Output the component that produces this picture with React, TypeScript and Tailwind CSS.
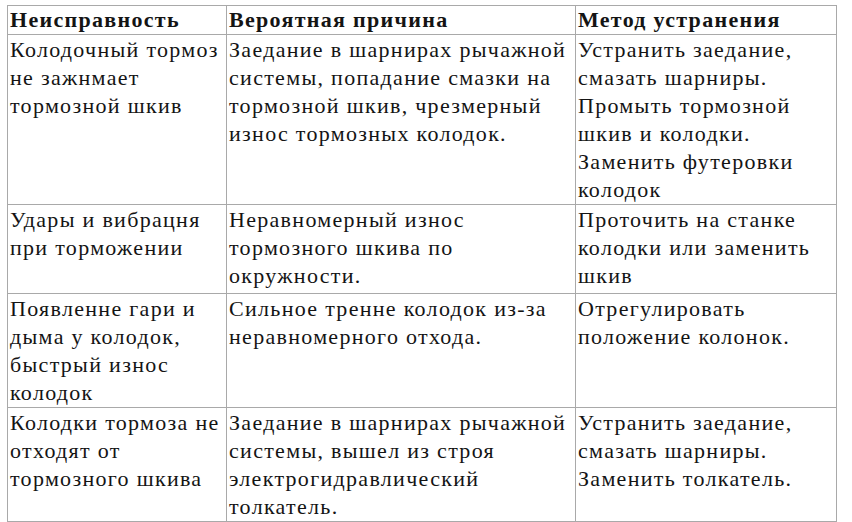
type Row = {
  fault: string[];
  cause: string[];
  fix: string[];
  h: string;
};

const rows: Row[] = [
  {
    fault: ["Колодочный тормоз", "не зажнмает", "тормозной шкив"],
    cause: [
      "Заедание в шарнирах рычажной",
      "системы, попадание смазки на",
      "тормозной шкив, чрезмерный",
      "износ тормозных колодок.",
    ],
    fix: [
      "Устранить заедание,",
      "смазать шарниры.",
      "Промыть тормозной",
      "шкив и колодки.",
      "Заменить футеровки",
      "колодок",
    ],
    h: "h-[169px]",
  },
  {
    fault: ["Удары и вибрацня", "при торможении"],
    cause: ["Неравномерный износ", "тормозного шкива по", "окружности."],
    fix: ["Проточить на станке", "колодки или заменить", "шкив"],
    h: "h-[89px]",
  },
  {
    fault: ["Появленне гари и", "дыма у колодок,", "быстрый износ", "колодок"],
    cause: ["Сильное тренне колодок из-за", "неравномерного отхода."],
    fix: ["Отрегулировать", "положение колонок."],
    h: "h-[114px]",
  },
  {
    fault: ["Колодки тормоза не", "отходят от", "тормозного шкива"],
    cause: [
      "Заедание в шарнирах рычажной",
      "системы, вышел из строя",
      "электрогидравлический",
      "толкатель.",
    ],
    fix: ["Устранить заедание,", "смазать шарниры.", "Заменить толкатель."],
    h: "h-[114px]",
  },
];

function Lines({ items }: { items: string[] }) {
  return (
    <>
      {items.map((t) => (
        <div key={t} className="whitespace-nowrap">
          {t}
        </div>
      ))}
    </>
  );
}

const cell = "border border-[#a9a9a9] align-top pl-[2px] pt-[1px] overflow-hidden";
const head = "border border-[#a9a9a9] text-left font-bold pl-[2px] align-middle tracking-[1.3px]";

export default function App() {
  return (
    <div className="w-[852px] h-[522px] bg-white overflow-hidden pt-[5px] pl-[7px]">
      <table className="border-collapse table-fixed w-[829px] text-[#141414] text-[22px] leading-[28px] tracking-[1.3px] font-['Liberation_Serif','Times_New_Roman',serif]">
        <colgroup>
          <col className="w-[219px]" />
          <col className="w-[349px]" />
          <col className="w-[261px]" />
        </colgroup>
        <thead>
          <tr className="h-[29px]">
            <th className={head}>Неисправность</th>
            <th className={head}>Вероятная причина</th>
            <th className={head}>Метод устранения</th>
          </tr>
        </thead>
        <tbody>
          {rows.map((r, i) => (
            <tr key={i} className={r.h}>
              <td className={cell}>
                <Lines items={r.fault} />
              </td>
              <td className={cell}>
                <Lines items={r.cause} />
              </td>
              <td className={cell}>
                <Lines items={r.fix} />
              </td>
            </tr>
          ))}
        </tbody>
      </table>
    </div>
  );
}
